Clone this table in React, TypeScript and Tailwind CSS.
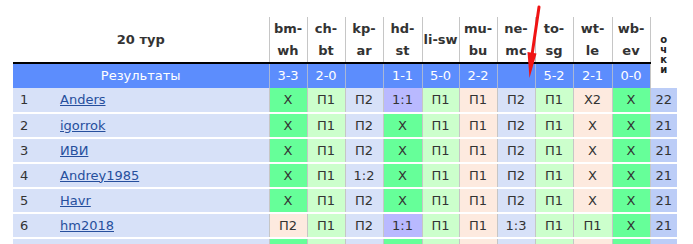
type Row = { pos: string; name: string; picks: string[]; colors: string; pts: string };

const games = [
  ["bm-", "wh", "3-3"],
  ["ch-", "bt", "2-0"],
  ["kp-", "ar", ""],
  ["hd-", "st", "1-1"],
  ["li-sw", "", "5-0"],
  ["mu-", "bu", "2-2"],
  ["ne-", "mc", ""],
  ["to-", "sg", "5-2"],
  ["wt-", "le", "2-1"],
  ["wb-", "ev", "0-0"],
];

// G = угадан исход (ничья), L = угадан исход, B = нет результата, P = точный счёт, E = мимо
const cellBg: Record<string, string> = {
  G: "bg-[#66ff99]",
  L: "bg-[#ccffcc]",
  B: "bg-[#d7e1f8]",
  P: "bg-[#b9b9ff]",
  E: "bg-[#fdeadf]",
};

const rows: Row[] = [
  { pos: "1", name: "Anders", picks: ["X", "П1", "П2", "1:1", "П1", "П1", "П2", "П1", "X2", "X"], colors: "GLBPLEBLEG", pts: "22" },
  { pos: "2", name: "igorrok", picks: ["X", "П1", "П2", "X", "П1", "П1", "П2", "П1", "X", "X"], colors: "GLBGLEBLEG", pts: "21" },
  { pos: "3", name: "ИВИ", picks: ["X", "П1", "П2", "X", "П1", "П1", "П2", "П1", "X", "X"], colors: "GLBGLEBLEG", pts: "21" },
  { pos: "4", name: "Andrey1985", picks: ["X", "П1", "1:2", "X", "П1", "П1", "П2", "П1", "X", "X"], colors: "GLBGLEBLEG", pts: "21" },
  { pos: "5", name: "Havr", picks: ["X", "П1", "П2", "X", "П1", "П1", "П2", "П1", "X", "X"], colors: "GLBGLEBLEG", pts: "21" },
  { pos: "6", name: "hm2018", picks: ["П2", "П1", "П2", "1:1", "П1", "П1", "1:3", "П1", "П1", "X"], colors: "ELBPLEBLLG", pts: "21" },
  // следующая строка уходит за край кадра, видна только заливка
  { pos: "", name: "", picks: ["", "", "", "", "", "", "", "", "", ""], colors: "GLBGLEBLEG", pts: "" },
];

const gameWidths = [38, 38, 38, 39, 37, 38, 38, 38, 39, 38];

export default function App() {
  return (
    <div className="relative w-[693px] h-[244px] overflow-hidden bg-white font-['DejaVu_Sans',Verdana,sans-serif] text-[13px] text-[#333]">
      <div className="pt-[17px] pl-[13px]">
        <table className="table-fixed border-collapse w-[664px]">
          <colgroup>
            <col className="w-[39px]" />
            <col className="w-[217px]" />
            {gameWidths.map((w, i) => (
              <col key={i} style={{ width: w }} />
            ))}
            <col className="w-[27px]" />
          </colgroup>
          <thead>
            <tr>
              <th colSpan={2} className="h-[46px] p-0 font-bold text-center border-b-2 border-b-black">
                20 тур
              </th>
              {games.map(([a, b]) => (
                <th key={a} className="p-0 font-bold text-center leading-[22px] border-l border-l-[#c6c6c6] border-b-2 border-b-black">
                  {a}
                  {b && <br />}
                  {b}
                </th>
              ))}
              <th rowSpan={2} className="p-0 align-middle border-l border-l-[#c6c6c6]">
                <div className="flex flex-col items-center pt-[4px] text-[10px] font-extrabold leading-[10px] text-[#222]">
                  <span>о</span>
                  <span>ч</span>
                  <span>к</span>
                  <span>и</span>
                </div>
              </th>
            </tr>
            <tr className="bg-[#5c8dfd] text-white h-[25px]">
              <td colSpan={2} className="p-0 text-center">Результаты</td>
              {games.map(([a, , r]) => (
                <td key={a} className="p-0 text-center border-l border-l-[#a9b7d6]">{r}</td>
              ))}
            </tr>
          </thead>
          <tbody>
            {rows.map((r, idx) => (
              <tr key={idx} className="h-[25px]">
                <td className="p-0 pl-[7px] bg-[#d7e1f8] border-b-2 border-b-white">{r.pos}</td>
                <td className="p-0 pl-[8px] bg-[#d7e1f8] border-b-2 border-b-white">
                  {r.name && <a href="#" className="text-[#264f9d] underline">{r.name}</a>}
                </td>
                {r.picks.map((p, i) => (
                  <td key={i} className={`p-0 text-center border-l border-l-[#c6c6c6] border-b-2 border-b-white ${cellBg[r.colors[i]]}`}>
                    {p}
                  </td>
                ))}
                <td className="p-0 text-center bg-[#bccdf7] border-l border-l-[#c6c6c6] border-b-2 border-b-white">{r.pts}</td>
              </tr>
            ))}
          </tbody>
        </table>
      </div>
      <svg className="absolute left-0 top-0 pointer-events-none" width={693} height={244}>
        <line x1={539} y1={7} x2={532} y2={55} stroke="#f01414" strokeWidth={3} strokeLinecap="round" />
        <polygon points="527.5,52 536.5,53.5 529.5,78" fill="#f01414" />
      </svg>
    </div>
  );
}
